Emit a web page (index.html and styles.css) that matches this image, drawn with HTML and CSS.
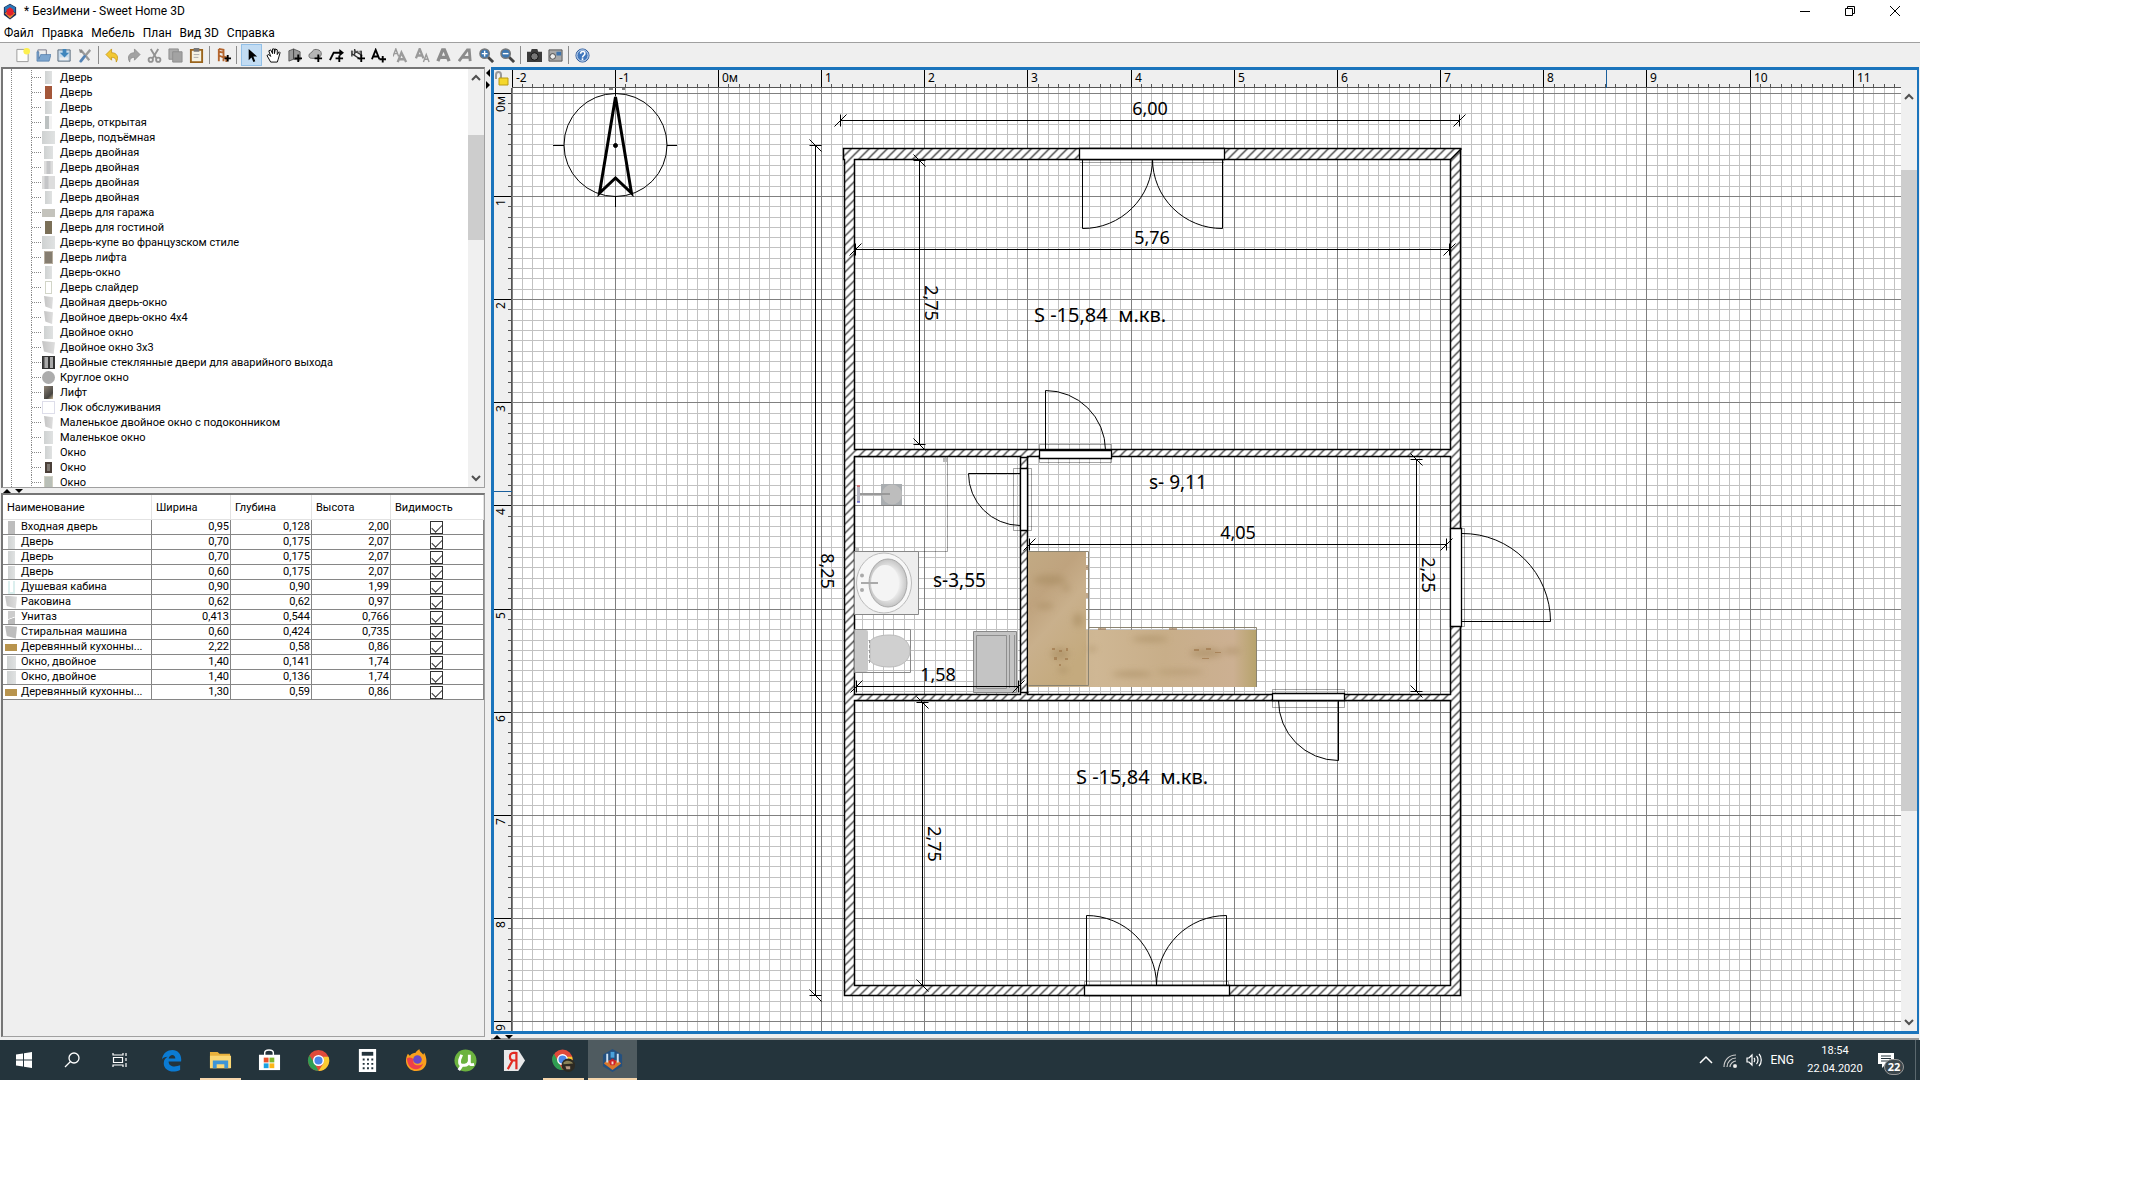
FILE: index.html
```html
<!DOCTYPE html>
<html lang="ru">
<head>
<meta charset="utf-8">
<title>* БезИмени - Sweet Home 3D</title>
<link rel="stylesheet" href="styles.css">
<script src="plan.js" defer></script>
</head>
<body>
<div class="screen">
<header class="titlebar">
  <svg class="applogo" viewBox="0 0 16 18"><path d="M8 0l7 4v9l-7 5-7-5V4z" fill="#1d2c55"/><path d="M8 1l6 3v6L8 6 2 10V4z" fill="#2a78b8"/><path d="M2 11l6 6 6-6-3-2H5z" fill="#e58a35"/><path d="M4 7l4-3 4 3v5l-4 2-4-2z" fill="#e3202b"/></svg>
  <h1>* БезИмени - Sweet Home 3D</h1>
  <div class="winbtns">
    <button aria-label="Свернуть"><svg viewBox="0 0 12 12"><path d="M1 6.500h10"/></svg></button>
    <button aria-label="Развернуть"><svg viewBox="0 0 12 12"><path d="M1.500 3.500h7v7h-7zM3.500 3.500v-2h7v7h-2"/></svg></button>
    <button aria-label="Закрыть"><svg viewBox="0 0 12 12"><path d="M1 1l10 10M11 1L1 11"/></svg></button>
  </div>
</header>
<nav class="menu"><button>Файл</button><button>Правка</button><button>Мебель</button><button>План</button><button>Вид 3D</button><button>Справка</button></nav>
<div class="toolbar">
  <button aria-label="Новый"><svg viewBox="0 0 16 16"><path d="M2 1.500h12v13H2z" fill="#fdfdfb" stroke="#999"/><circle cx="12.500" cy="3.500" r="3.500" fill="#fdf04e"/></svg></button>
  <button aria-label="Открыть"><svg viewBox="0 0 16 16"><path d="M2 2h9v8H2z" fill="#eee" stroke="#778"/><path d="M1 4v10h13l2-7H5l-2 5V4z" fill="#7da6cf" stroke="#4a76a5" stroke-width=".7"/></svg></button>
  <button aria-label="Сохранить"><svg viewBox="0 0 16 16"><path d="M1 2h13v12H1z" fill="#c9dcec" stroke="#567"/><path d="M3 10h9v3H3z" fill="#eee"/><path d="M6 1h4v4h3L8 10 3 5h3z" fill="#3f86bd"/></svg></button>
  <button aria-label="Настройки"><svg viewBox="0 0 16 16"><path d="M3 2l9 11M13 2L8 8" stroke="#9a9a9a" stroke-width="2.500"/><path d="M7 9l-4 5" stroke="#5583b5" stroke-width="3" stroke-linecap="round"/><path d="M1 1l3 1 1 3-3 0z" fill="#888"/></svg></button>
  <i></i>
  <button aria-label="Отменить"><svg viewBox="0 0 16 16"><path d="M1 7l6-6v4c6 0 8 5 5 10 0-4-2-5-5-5v3z" fill="#f2c832" stroke="#c39311" stroke-width=".8"/></svg></button>
  <button aria-label="Повторить"><svg viewBox="0 0 16 16"><path d="M15 7L9 1v4C3 5 1 10 4 15c0-4 2-5 5-5v3z" fill="#a2a2a2" stroke="#8a8a8a" stroke-width=".8"/></svg></button>
  <button aria-label="Вырезать"><svg viewBox="0 0 16 16" fill="none" stroke="#929292" stroke-width="2"><path d="M4 1l6 10M12 1L6 11"/><circle cx="4" cy="12.500" r="2.300"/><circle cx="12" cy="12.500" r="2.300"/></svg></button>
  <button aria-label="Копировать"><svg viewBox="0 0 16 16"><path d="M1 1h10v11H1z" fill="#ababab" stroke="#8e8e8e"/><path d="M5 4h10v11H5z" fill="#a3a3a3" stroke="#8e8e8e"/></svg></button>
  <button aria-label="Вставить"><svg viewBox="0 0 16 16"><path d="M2 2h12v13H2z" fill="#f6f3e4" stroke="#9a641c" stroke-width="2"/><path d="M5 0h6v4H5z" fill="#777"/><path d="M5 7h6M5 10h5" stroke="#aaa"/></svg></button>
  <i></i>
  <button aria-label="Добавить мебель"><svg viewBox="0 0 16 16"><path d="M3 1l5 1v7l3 1v5M3 1v13M3 8l5 2v4M3 4l5 1" stroke="#b4652e" stroke-width="2" fill="none"/><path d="M9 11h7M12.500 7.500v7" stroke="#000" stroke-width="2"/></svg></button>
  <i></i>
  <button class="on" aria-label="Выбрать"><svg viewBox="0 0 16 16"><path d="M5 1v12l3-3 2 5 2-1-2-5h4z" fill="#000"/></svg></button>
  <button class="gap" aria-label="Перемещать"><svg viewBox="0 0 16 16"><path d="M5 15L1 8l2-1 2 2L3 3l2-1 2 4V1h2v5l1-5 2 1v5l2-3 1 1-2 7-1 3z" fill="#fff" stroke="#000"/></svg></button>
  <button aria-label="Стены"><svg viewBox="0 0 16 16"><path d="M2 3l5-2v11l-5 2zM7 1l7 3v9l-7-1z" fill="#9a9a9a" stroke="#444" stroke-width=".8"/><path d="M8 11h8M12 7v8" stroke="#000" stroke-width="2"/></svg></button>
  <button aria-label="Комнаты"><svg viewBox="0 0 16 16"><path d="M1 8c0-3 3-2 4-5 2-3 9-1 9 2 1 4-3 6-6 6H4c-2 0-3-1-3-3z" fill="#b5b5b5" stroke="#666"/><path d="M7 11h8M11 7v8" stroke="#000" stroke-width="2"/></svg></button>
  <button aria-label="Линии"><svg viewBox="0 0 16 16"><path d="M1 13l4-8h8" fill="none" stroke="#000" stroke-width="2"/><path d="M11 1l5 4-5 4z"/><path d="M7 11h8M11 8v7" stroke="#000" stroke-width="2"/></svg></button>
  <button aria-label="Размеры"><svg viewBox="0 0 16 16"><path d="M2 6l9 6M5 3l8 5M2 3v6M5 1v6M12 3v6" stroke="#333" stroke-width="1.500"/><path d="M1 4h12" stroke="#555" stroke-dasharray="2 1" stroke-width="2"/><path d="M8 11h8M12 7v8" stroke="#000" stroke-width="2"/></svg></button>
  <button aria-label="Текст"><svg viewBox="0 0 16 16"><path d="M1 12L5 2l4 10M2.500 9h5" fill="none" stroke="#000" stroke-width="2"/><path d="M9 12h7M12.500 8.500v7" stroke="#000" stroke-width="2"/></svg></button>
  <button class="gap" aria-label="Увеличить шрифт"><svg viewBox="0 0 16 16" fill="none" stroke="#9a9a9a"><path d="M0 9l3-8 3 8M1 6h4" stroke-width="1.500"/><path d="M5 15l4-10 5 10M7 12h5" stroke-width="2.500"/></svg></button>
  <button class="gap" aria-label="Уменьшить шрифт"><svg viewBox="0 0 16 16" fill="none" stroke="#9a9a9a"><path d="M1 11L5 1l4 10M3 8h4" stroke-width="2.500"/><path d="M9 15l3-8 3 8M10 12h4" stroke-width="1.500"/></svg></button>
  <button aria-label="Жирный"><svg viewBox="0 0 16 16" fill="none" stroke="#8c8c8c"><path d="M2 14L7 2h2l5 12M5 10h6" stroke-width="3.500"/></svg></button>
  <button class="gap" aria-label="Курсив"><svg viewBox="0 0 16 16" fill="none" stroke="#8c8c8c"><path d="M1 14L10 2h2l1 12M5 10h7" stroke-width="3"/></svg></button>
  <button aria-label="Приблизить"><svg viewBox="0 0 16 16"><path d="M9 9l6 6" stroke="#444" stroke-width="3"/><circle cx="6" cy="6" r="5" fill="#3d77b0" stroke="#777" stroke-width="1.500"/><path d="M3 6h6M6 3v6" stroke="#fff" stroke-width="1.500"/></svg></button>
  <button aria-label="Отдалить"><svg viewBox="0 0 16 16"><path d="M9 9l6 6" stroke="#444" stroke-width="3"/><circle cx="6" cy="6" r="5" fill="#3d77b0" stroke="#777" stroke-width="1.500"/><path d="M3 6h6" stroke="#fff" stroke-width="1.500"/></svg></button>
  <i></i>
  <button aria-label="Фото"><svg viewBox="0 0 16 16"><path d="M0 4h4l1-3h6l1 3h4v11H0z" fill="#3b3b3b"/><circle cx="8" cy="9" r="4" fill="#777" stroke="#111"/></svg></button>
  <button aria-label="Видео"><svg viewBox="0 0 16 16"><path d="M1 2h14v12H1z" fill="#a8a8a8" stroke="#555"/><path d="M9 4h5v4H9z" fill="#3f74ad"/><circle cx="5" cy="9" r="3" fill="#eee" stroke="#444"/></svg></button>
  <i></i>
  <button aria-label="Помощь"><svg viewBox="0 0 16 16"><circle cx="8" cy="8" r="7" fill="#3f77bd" stroke="#28569a"/><circle cx="8" cy="8" r="6" fill="none" stroke="#dfe9f5"/><path d="M6 6c0-3 5-3 4.500 0C10.500 8 8 8 8 10M8 11v2" fill="none" stroke="#fff" stroke-width="1.700"/></svg></button>
</div>
<main class="work">
  <section class="side">
    <div class="catalog">
      <ul class="tree">
        <li><b class="pic"></b>Дверь</li>
        <li><b class="pic brown"></b>Дверь</li>
        <li><b class="pic"></b>Дверь</li>
        <li><b class="pic ajar"></b>Дверь, открытая</li>
        <li><b class="pic wide"></b>Дверь, подъёмная</li>
        <li><b class="pic mid"></b>Дверь двойная</li>
        <li><b class="pic mid pane"></b>Дверь двойная</li>
        <li><b class="pic wide pane"></b>Дверь двойная</li>
        <li><b class="pic"></b>Дверь двойная</li>
        <li><b class="pic flat"></b>Дверь для гаража</li>
        <li><b class="pic olive"></b>Дверь для гостиной</li>
        <li><b class="pic wide"></b>Дверь-купе во французском стиле</li>
        <li><b class="pic lift"></b>Дверь лифта</li>
        <li><b class="pic"></b>Дверь-окно</li>
        <li><b class="pic frame"></b>Дверь слайдер</li>
        <li><b class="pic mid skew"></b>Двойная дверь-окно</li>
        <li><b class="pic mid skew"></b>Двойное дверь-окно 4x4</li>
        <li><b class="pic mid"></b>Двойное окно</li>
        <li><b class="pic wide skew"></b>Двойное окно 3x3</li>
        <li><b class="pic black"></b>Двойные стеклянные двери для аварийного выхода</li>
        <li><b class="pic round"></b>Круглое окно</li>
        <li><b class="pic cab"></b>Лифт</li>
        <li><b class="pic hatch"></b>Люк обслуживания</li>
        <li><b class="pic mid skew"></b>Маленькое двойное окно с подоконником</li>
        <li><b class="pic mid"></b>Маленькое окно</li>
        <li><b class="pic"></b>Окно</li>
        <li><b class="pic dark"></b>Окно</li>
        <li><b class="pic green"></b>Окно</li>
      </ul>
      <div class="scroll"><svg viewBox="0 0 10 10"><path d="M1 7l4-4 4 4"/></svg><span class="thumb"></span><svg viewBox="0 0 10 10"><path d="M1 3l4 4 4-4"/></svg></div>
    </div>
    <div class="split"><svg viewBox="0 0 24 5"><path d="M2 5l4-4 4 4zM14 1h8l-4 4z"/></svg></div>
    <div class="furniture">
      <table>
        <colgroup><col class="c1"><col class="c2"><col class="c3"><col class="c4"><col></colgroup>
        <thead><tr><th>Наименование</th><th>Ширина</th><th>Глубина</th><th>Высота</th><th>Видимость</th></tr></thead>
        <tbody>
          <tr><td><b class="pic gray"></b>Входная дверь</td><td>0,95</td><td>0,128</td><td>2,00</td><td><input type="checkbox" checked aria-label="Видимость: Входная дверь"></td></tr>
          <tr><td><b class="pic"></b>Дверь</td><td>0,70</td><td>0,175</td><td>2,07</td><td><input type="checkbox" checked aria-label="Видимость: Дверь"></td></tr>
          <tr><td><b class="pic"></b>Дверь</td><td>0,70</td><td>0,175</td><td>2,07</td><td><input type="checkbox" checked aria-label="Видимость: Дверь"></td></tr>
          <tr><td><b class="pic"></b>Дверь</td><td>0,60</td><td>0,175</td><td>2,07</td><td><input type="checkbox" checked aria-label="Видимость: Дверь"></td></tr>
          <tr><td><b class="pic glass"></b>Душевая кабина</td><td>0,90</td><td>0,90</td><td>1,99</td><td><input type="checkbox" checked aria-label="Видимость: Душевая кабина"></td></tr>
          <tr><td><b class="pic wide skew"></b>Раковина</td><td>0,62</td><td>0,62</td><td>0,97</td><td><input type="checkbox" checked aria-label="Видимость: Раковина"></td></tr>
          <tr><td><b class="pic bowl"></b>Унитаз</td><td>0,413</td><td>0,544</td><td>0,766</td><td><input type="checkbox" checked aria-label="Видимость: Унитаз"></td></tr>
          <tr><td><b class="pic wide gray skew"></b>Стиральная машина</td><td>0,60</td><td>0,424</td><td>0,735</td><td><input type="checkbox" checked aria-label="Видимость: Стиральная машина"></td></tr>
          <tr><td><b class="pic wood"></b>Деревянный кухонны...</td><td>2,22</td><td>0,58</td><td>0,86</td><td><input type="checkbox" checked aria-label="Видимость: Деревянный кухонный стол"></td></tr>
          <tr><td><b class="pic mid"></b>Окно, двойное</td><td>1,40</td><td>0,141</td><td>1,74</td><td><input type="checkbox" checked aria-label="Видимость: Окно, двойное"></td></tr>
          <tr><td><b class="pic mid"></b>Окно, двойное</td><td>1,40</td><td>0,136</td><td>1,74</td><td><input type="checkbox" checked aria-label="Видимость: Окно, двойное"></td></tr>
          <tr><td><b class="pic wood"></b>Деревянный кухонны...</td><td>1,30</td><td>0,59</td><td>0,86</td><td><input type="checkbox" checked aria-label="Видимость: Деревянный кухонный стол"></td></tr>
        </tbody>
      </table>
    </div>
  </section>
  <div class="vsplit"><svg viewBox="0 0 6 20"><path d="M5 0v8L1 4zM1 12v8l4-4z"/></svg></div>
  <section class="planside">
    <div class="planframe">
      <svg class="plan">
        <defs>
          <pattern id="hatch" width="9" height="9" patternUnits="userSpaceOnUse"><path d="M-1 10L10-1M-1 1L1-1M8 10l2-2" stroke="#111" stroke-width="1.200"/></pattern>
          <linearGradient id="woodv" x1="0" y1="0" x2=".5" y2="1"><stop offset="0" stop-color="#c2aa84"/><stop offset=".35" stop-color="#bfa37e"/><stop offset=".6" stop-color="#c9b08c"/><stop offset="1" stop-color="#c4aa7e"/></linearGradient>
          <linearGradient id="woodh"><stop offset="0" stop-color="#c5ae88"/><stop offset=".3" stop-color="#cfb794"/><stop offset=".6" stop-color="#c8ae89"/><stop offset=".9" stop-color="#ccb092"/><stop offset="1" stop-color="#b7a36c"/></linearGradient>
          <radialGradient id="basin"><stop offset="0" stop-color="#fff"/><stop offset=".6" stop-color="#eee"/><stop offset="1" stop-color="#c4c4c4"/></radialGradient>
          <filter id="soft"><feGaussianBlur stdDeviation="3"/></filter>
          <clipPath id="area"><rect x="512" y="88" width="1388" height="944"/></clipPath>
        </defs>
        <g transform="translate(-494 -70)">
          <g id="grid"></g>
          <g class="compass" clip-path="url(#area)">
            <circle cx="615.500" cy="145" r="51.500"/>
            <path d="M553 145.500h11M667 145.500h10M615.500 88v8M615.500 196v11M609 89h4M622 89h3"/>
            <path d="M615.500 97l-16 96 16-15 16 15z" stroke-width="3"/>
            <circle cx="615.500" cy="145.500" r="2" fill="#000"/>
          </g>
          <g class="wall" transform="translate(.5 .5)">
            <path d="M843 148h617v847H844V159h-1zM854 159v290h596V159zM854 456v238h166V456zM1027 456v238h423V456zM854 700v285h596V700z" fill="#fff" fill-rule="evenodd" stroke="none"/>
            <path d="M843 148h617v847H844V159h-1zM854 159v290h596V159zM854 456v238h166V456zM1027 456v238h423V456zM854 700v285h596V700z" fill="url(#hatch)" fill-rule="evenodd" stroke-width="1.500"/>
            <path d="M1020 457h8M1020 692h8M1450 159l11-11" stroke-width="1.500"/>
          </g>
          <g class="outline">
            <path d="M854 457h93.500v94.500H854zM1039.500 444.500h72v18h-72zM1013.500 468.500h18v62h-18zM1272.500 689.500h72v18h-72zM1451.500 528.500h13v98h-13zM1080 162.500h144M1084.500 985v-3.500h144v3.500"/>
          </g>
          <g class="opening">
            <path transform="translate(.5 .5)" stroke-width="1.300" d="M1079 148h145v11h-145zM1084 985h145v10h-145zM1039 450h72v8h-72zM1020 468h7v62h-7zM1272 693h72v7h-72zM1450 528h11v98h-11z"/>
            <path class="leaf" d="M1082.500 159v69.500A69.500 69.500 0 0 0 1152.500 159A69.500 69.500 0 0 0 1222.500 228.500V159M1086.500 985v-69.500A70 70 0 0 1 1156.500 985A70 70 0 0 1 1226.500 915.500V985M1045.500 450v-59.500A60 60 0 0 1 1105.500 450M1020 473.500h-51.500A52 52 0 0 0 1020 525.500M1338.500 700v60.500A60 60 0 0 1 1278.500 700M1462 621.500h88.500A88 88 0 0 0 1462 533.500"/>
          </g>
          <g class="fixtures">
            <path d="M881 484h21v21h-21z" fill="#a9adb0"/><circle cx="892" cy="494.500" r="10" fill="#bdbdbd"/><path d="M859 494h31" stroke="#999" stroke-width="2"/><path d="M858.500 486v16" stroke="#b9b9c4" stroke-width="3"/><path d="M857 486h3" stroke="#d33"/><path d="M857 502h3" stroke="#33c"/><path d="M943 458h4v4h-4zM855 548h4v4h-4z" fill="#bbb"/>
            <path d="M854.500 551.500h64v63h-64z" fill="#eee" stroke="#888"/>
            <ellipse cx="884" cy="583" rx="27.500" ry="30" fill="#f7f7f7" stroke="#bbb"/><ellipse cx="888" cy="583" rx="19" ry="24" fill="url(#basin)" stroke="#aaa"/><ellipse cx="885" cy="583" rx="14" ry="18" fill="#f4f4f4"/><path d="M861 583h17" stroke="#aaa" stroke-width="2"/><circle cx="862" cy="575.500" r="2" fill="#aaa"/><circle cx="862" cy="590" r="2" fill="#aaa"/>
            <path d="M854.500 629.500h56v43h-56z" fill="none" stroke="#888"/><rect x="855" y="630" width="13" height="42" rx="2" fill="#c9c9c9"/><path d="M870 641c4-4 10-6 20-6 12 0 20 7 20 16s-8 16-20 16c-10 0-16-2-20-6z" fill="#d0d0d0" stroke="#bbb"/><path d="M869.500 640v23" stroke="#999" stroke-dasharray="3 2"/>
            <path d="M973.500 631.500h43v61h-43z" fill="#c4c4c4" stroke="#888"/><path d="M976.500 635.500h30v53h-30zM1009.500 635v53M1014.500 635v53" fill="none" stroke="#8f8f8f"/>
            <path d="M1028 551h58v134h-58z" fill="url(#woodv)"/><path d="M1086 630h170v57h-228v-2h58z" fill="url(#woodh)"/>
            <g filter="url(#soft)" fill="#a68a5f" opacity=".55"><ellipse cx="1050" cy="580" rx="16" ry="5"/><ellipse cx="1066" cy="588" rx="4" ry="3"/><ellipse cx="1078" cy="620" rx="5" ry="7"/><ellipse cx="1045" cy="606" rx="9" ry="3"/><ellipse cx="1060" cy="654" rx="9" ry="6"/><ellipse cx="1063" cy="670" rx="5" ry="3"/><ellipse cx="1150" cy="639" rx="18" ry="3"/><ellipse cx="1092" cy="649" rx="5" ry="2"/><ellipse cx="1206" cy="653" rx="16" ry="5"/><ellipse cx="1232" cy="651" rx="9" ry="3"/><ellipse cx="1132" cy="674" rx="20" ry="3"/><ellipse cx="1180" cy="672" rx="24" ry="2"/></g>
            <g fill="#9a7042" opacity=".6"><path d="M1052 648h3v2h-3zM1059 650h3v2h-3zM1066 648h2v3h-2zM1054 657h3v3h-3zM1065 658h3v2h-3zM1059 664h2v2h-2zM1194 649h5v2h-5zM1206 648h5v2h-5zM1215 652h6v1h-6zM1202 658h7v1h-7zM1086 565h2v5h-2zM1086 593h2v5h-2zM1098 628h8v2h-8zM1169 628h8v2h-8z"/></g>
            <path d="M1028.500 551.500h60v134h-60M1088.500 627.500h168V687" fill="none" stroke="#8a8371"/>
          </g>
          <g id="dims"></g>
          <g class="notes">
            <text class="big" x="1034" y="322">S -15,84&#160; м.кв.</text>
            <text class="big" x="1076" y="784">S -15,84&#160; м.кв.</text>
            <text x="1149" y="489">s- 9,11</text>
            <text x="933" y="587">s-3,55</text>
          </g>
        </g>
      </svg>
      <div class="rulertop"><svg width="100%" height="18"><g id="rulerx" transform="translate(-512 -70)"></g></svg></div>
      <div class="rulerleft"><svg width="18" height="100%"><g id="rulery" transform="translate(-494 -88)"></g></svg></div>
      <button class="lock" aria-label="Блокировка плана"><svg viewBox="0 0 16 16"><path d="M2 8V4c0-4 5-4 5 0v3" fill="none" stroke="#999" stroke-width="2"/><path d="M5 7h9v7H5z" fill="#f5d72c" stroke="#b99a12"/></svg></button>
      <div class="scroll planscroll"><svg viewBox="0 0 10 10"><path d="M1 7l4-4 4 4"/></svg><span class="thumb"></span><svg viewBox="0 0 10 10"><path d="M1 3l4 4 4-4"/></svg></div>
    </div>
    <div class="split low"><svg viewBox="0 0 24 5"><path d="M2 5l4-4 4 4zM14 1h8l-4 4z"/></svg></div>
  </section>
</main>
<footer class="taskbar">
  <button aria-label="Пуск"><svg viewBox="0 0 16 16" fill="#fff"><path d="M0 2.500l7-1v6H0zM8 1.300L16 0v7.500H8zM0 8.500h7v6l-7-1zM8 8.500h8V16l-8-1.300z"/></svg></button>
  <button aria-label="Поиск"><svg viewBox="0 0 16 16" fill="none" stroke="#fff" stroke-width="1.300"><circle cx="10" cy="6" r="5"/><path d="M6.500 9.500L1 15"/></svg></button>
  <button aria-label="Представление задач"><svg viewBox="0 0 16 16" fill="none" stroke="#fff" stroke-width="1.200"><path d="M1 1v2h10V1M1.500 5.500h9v5h-9zM1 15v-2h10v2M14 1v3M14 6v3M14 11v4"/></svg></button>
  <div class="apps">
  <button aria-label="Edge"><svg viewBox="0 0 24 24"><path d="M2 11C3 4 8 1 13 1c6 0 10 5 9 12H9c0 6 7 6 12 4v5c-9 4-18 0-17-8 0-3 2-5 4-6-3 0-5 1-6 3zM9 10h7c0-5-6-5-7 0z" fill="#0b7bd3"/></svg></button>
  <button class="open" aria-label="Проводник"><svg viewBox="0 0 24 24"><path d="M1 3h8l2 2h11v15H1z" fill="#e9b13c"/><path d="M1 7h22v13H1z" fill="#fbd774"/><path d="M4 20v-8h16v8h-4v-4H8v4z" fill="#3e95d6"/></svg></button>
  <button aria-label="Магазин"><svg viewBox="0 0 24 24"><path d="M7 7V4c0-4 9-4 9 0v3" fill="none" stroke="#fff" stroke-width="1.500"/><path d="M1 6h22v16H1z" fill="#fff"/><path d="M6 9h5v5H6z" fill="#e8502a"/><path d="M12 9h5v5h-5z" fill="#7fb72a"/><path d="M6 15h5v5H6z" fill="#1ba1e2"/><path d="M12 15h5v5h-5z" fill="#fbb616"/></svg></button>
  <button aria-label="Chrome"><svg viewBox="0 0 24 24"><circle cx="12" cy="12" r="11" fill="#e04a3b"/><path d="M2.500 6.500L8 15l4 8A11 11 0 0 1 2.500 6.500z" fill="#2f9e52"/><path d="M12 23l5-8V8h5.500A11 11 0 0 1 12 23z" fill="#fbcb32"/><circle cx="12" cy="12" r="5" fill="#4a86e8" stroke="#fff" stroke-width="1.500"/></svg></button>
  <button aria-label="Калькулятор"><svg viewBox="0 0 24 24"><path d="M3 0h18v24H3z" fill="#fff"/><path d="M6 3h12v4H6z" fill="#24343c"/><path d="M7 11h11M7 15.500h11M7 20h11" stroke="#24343c" stroke-width="2" stroke-dasharray="2 2.500"/></svg></button>
  <button aria-label="Firefox"><svg viewBox="0 0 24 24"><path d="M3 5l2 2c2-2 4-3 6-3 1-2 3-3 4-4 0 3 3 4 4 6l1-2c5 9 2 19-8 19C3 23-2 14 3 5z" fill="#f9a01e"/><path d="M2 10c2-2 6-1 7 1-2 6 5 8 10 4-3 9-16 9-17-5z" fill="#ee3f4a"/><circle cx="13" cy="11" r="4.500" fill="#6b48c8"/></svg></button>
  <button aria-label="µTorrent"><svg viewBox="0 0 24 24"><circle cx="12" cy="12" r="11.500" fill="#6cb33f"/><path d="M8 6l-2 5c-1 6 1 6 5 6 3 0 4-1 5-4V6M5 22l4-6M16 13c0 3 1 4 5 3" fill="none" stroke="#fff" stroke-width="3"/></svg></button>
  <button aria-label="Яндекс"><svg viewBox="0 0 24 24"><path d="M1 1h15l7 11-7 11H1z" fill="#e9e9ea"/><path d="M14 3v18M14 4h-3c-5 0-5 8 0 8h3M10 12l-5 9" fill="none" stroke="#e22b22" stroke-width="2.300"/></svg></button>
  <button class="open" aria-label="Chrome, профиль"><svg viewBox="0 0 24 24"><circle cx="11" cy="11" r="10.500" fill="#e04a3b"/><path d="M2 5l5 9 4 8A11 11 0 0 1 2 5z" fill="#2f9e52"/><path d="M11 22l5-8V8h5A11 11 0 0 1 11 22z" fill="#fbcb32"/><circle cx="11" cy="11" r="5" fill="#4a86e8" stroke="#fff" stroke-width="1.500"/><circle cx="17" cy="17" r="7" fill="#2d2a22"/><path d="M12 14c3-3 8-2 10 1l-10 1z" fill="#8a8257"/><path d="M14 18h5v3h-4z" fill="#b99a84"/></svg></button>
  <button class="open active" aria-label="Sweet Home 3D"><svg viewBox="0 0 24 24"><path d="M12 0l10 6v12l-10 6-10-6V6z" fill="#24507f"/><path d="M3 15l9 7 9-7-3-3H6z" fill="#d9772c"/><path d="M6.500 5v9M17.500 5v9" stroke="#cfe3f3" stroke-width="2"/><path d="M12 3v6" stroke="#4aa2dc" stroke-width="4"/><path d="M12 10l4 3-2 4h-4l-2-4z" fill="#cf2027"/><path d="M11 13h2v3h-2z" fill="#f4d9d0"/></svg></button>
  </div>
  <div class="tray">
    <svg class="i16" viewBox="0 0 16 16" fill="none" stroke="#fff" stroke-width="1.500"><path d="M2 11l6-6 6 6"/></svg>
    <svg class="i16" viewBox="0 0 16 16" fill="none" stroke="#ccc" stroke-width="1.200"><path d="M2 15C2 8 7 3 14 3M5 15c0-5 4-9 9-9M8 15c0-3 3-6 6-6"/><circle cx="13" cy="14" r="1.500" fill="#fff"/></svg>
    <svg class="i16" viewBox="0 0 16 16" fill="none" stroke="#fff" stroke-width="1.200"><path d="M1 6h2l3-3v10l-3-3H1zM8 6c1 1 1 3 0 4M10.500 4c2 2 2 6 0 8M13 2c3 3 3 9 0 12"/></svg>
    <span>ENG</span>
    <time class="clock">18:54<br>22.04.2020</time>
    <span class="bell"><svg class="i16" viewBox="0 0 16 16"><path d="M0 1h16v11H8l-4 4v-4H0z" fill="#fff"/><path d="M3 4h10M3 6.500h10M3 9h8" stroke="#24343c"/></svg><em>22</em></span>
  </div>
</footer>
</div>
</body>
</html>
```
FILE: styles.css
```css
* { box-sizing: border-box; }
body { margin: 0; background: #fff; color: #000; font: 11px/15px Roboto, "Noto Sans", sans-serif; }
button { border: 0; padding: 0; margin: 0; background: none; font: inherit; color: inherit; }
svg { display: block; }
.screen { display: flex; flex-direction: column; height: 100vh; padding: 0 222px 120px 0; }

.titlebar { display: flex; align-items: center; height: 22px; padding-left: 3px; }
.titlebar h1 { margin: 0; font-size: 12px; font-weight: 400; }
.applogo { width: 14px; height: 17px; margin-right: 7px; }
.winbtns { display: flex; margin: 0 3px 0 auto; }
.winbtns button { display: grid; place-items: center; width: 45px; height: 20px; }
.winbtns svg { width: 12px; height: 12px; fill: none; stroke: #000; }
.menu { display: flex; gap: 8px; height: 21px; padding: 2px 0 0 4px; font-size: 12px; border-bottom: 1px solid #a0a0a0; }
.toolbar { display: flex; align-items: center; height: 24px; padding-left: 9px; background: #efefef; border-left: 3px dotted #efefef; }
.toolbar button { display: grid; place-items: center; width: 21px; height: 22px; }
.toolbar svg { width: 15px; height: 15px; }
.toolbar i { width: 1px; height: 18px; margin: 0 3px 0 2px; background: #8c8c8c; }
.toolbar .on { margin-left: 1px; background: #c2dcf3; outline: 1px solid #92c0e8; outline-offset: -1px; }
.toolbar .gap { margin-left: 1px; }

.work { display: flex; flex: 1; min-height: 0; background: #efefef; }
.side { display: flex; flex-direction: column; width: 485px; padding: 0 0 3px 1px; }
.catalog { display: flex; height: 421px; overflow: hidden; background: #fff; border: 2px solid #767676; border-right: 1px solid #a0a0a0; border-bottom: 1px solid #a0a0a0; }
.tree { flex: 1; margin: 0 0 0 8px; padding: 1px 0 0 19px; list-style: none; border-left: 1px dotted #888; }
.tree li { display: flex; align-items: center; height: 15px; border-left: 1px dotted #888; white-space: nowrap; }
.tree li::before { content: ""; width: 9px; border-top: 1px dotted #888; }
.pic { flex: none; width: 7px; height: 13px; margin: 0 6px 0 5px; background: linear-gradient(90deg, #cfd2d2, #e0e2e2); }
.tree .pic { margin: 0 8px 0 4px; }
.tree .mid, .tree .green, .tree .lift, .tree .cab { width: 9px; margin: 0 7px 0 3px; }
.tree .wide, .tree .flat, .tree .black, .tree .round, .tree .hatch { width: 13px; margin: 0 5px 0 1px; }
.mid { width: 9px; margin: 0 5px 0 4px; }
.wide, .wood { width: 12px; margin: 0 4px 0 2px; }
.pane { background: linear-gradient(90deg, #ddd 2px, #c4c5c7 3px, #c4c5c7 6px, #ddd 7px); }
.ajar { background: linear-gradient(90deg, #bcc1c1 4px, #f2f2f2 4px); }
.skew { clip-path: polygon(0 0, 100% 10%, 90% 100%, 15% 80%); background: linear-gradient(90deg, #c4c4c4, #dedede); }
.gray { background: #bdbdbd; }
.brown { background: #a4573a; }
.olive { background: #7b7058; }
.flat { height: 8px; background: #c4c3bc; }
.lift { background: #857d70; border: 1px solid #b7aea0; }
.frame { background: #fff; border: 1px solid #d2d5c8; }
.black { background: linear-gradient(90deg, #444 1px, #aaa 2px 5px, #333 5px 7px, #aaa 7px 10px, #333 10px); border: 1px solid #333; }
.round { border-radius: 50%; background: #acacac; }
.cab { background: linear-gradient(135deg, #8d8376, #474541 70%, #c6b493); }
.hatch { background: #fff; border: 1px solid #dedeea; }
.dark { background: #7e7872; border: 2px solid #4b4039; height: 11px; }
.green { background: #b9bfb7; border: 1px solid #d0d0c4; }
.glass { background: #fff; border: 2px solid #dcefee; border-top: 0; }
.bowl { background: linear-gradient(160deg, #ccc 50%, #fff 55%, #bbb 60%); }
.wood { height: 7px; background: #b8944e; }

.scroll { display: flex; flex-direction: column; width: 16px; background: #f0f0f0; }
.scroll svg { width: 10px; height: 10px; margin: 4px 3px; fill: none; stroke: #505050; stroke-width: 2; }
.scroll .thumb { height: 25%; margin-top: 48px; margin-bottom: auto; background: #cdcdcd; }
.split { height: 5px; }
.split svg { width: 24px; height: 5px; }
.split.low { height: 6px; border-bottom: 2px solid #9a9a9a; }
.vsplit { width: 6px; padding-top: 2px; }
.vsplit svg { width: 6px; height: 20px; }

.furniture { flex: 1; overflow: hidden; border: 2px solid #767676; border-right: 1px solid #a0a0a0; border-bottom: 1px solid #a0a0a0; }
.furniture table { width: 100%; table-layout: fixed; border-collapse: separate; border-spacing: 0; background: #fff; }
.c1 { width: 149px; }
.c2 { width: 79px; }
.c3 { width: 81px; }
.c4 { width: 79px; }
.furniture th { height: 25px; padding: 1px 0 0 4px; text-align: left; font-weight: 400; border-right: 1px solid #e2e2e2; border-bottom: 1px solid #e2e2e2; }
.furniture td { height: 15px; padding: 0 1px 0 0; line-height: 14px; text-align: right; border-right: 1px solid #868686; border-bottom: 1px solid #868686; }
.furniture td:first-child { display: flex; align-items: center; white-space: nowrap; overflow: hidden; }
.furniture td:last-child { text-align: center; }
.furniture input { display: block; appearance: none; width: 13px; height: 13px; margin: 0 auto; background: #fff; border: 1px solid #333; }
.furniture input:checked::before { content: ""; display: block; width: 9px; height: 5px; margin: 2px 1px; border: solid #333; border-width: 0 0 1px 1px; rotate: -45deg; }

.planside { display: flex; flex: 1; flex-direction: column; min-width: 0; padding-right: 1px; }
.planframe { display: grid; grid-template: 18px 1fr / 18px 1fr 16px; flex: 1; min-height: 0; background: #efefef; border: 3px solid #1b74bc; border-right-width: 2px; }
.plan { grid-area: 1 / 1 / 3 / 3; width: 100%; height: 100%; background: #fff; overflow: hidden; font-family: "Noto Sans", sans-serif; }
.rulertop { grid-area: 1 / 2; background: #efefef; }
.rulerleft { grid-area: 2 / 1; background: #efefef; }
.rulertop svg, .rulerleft svg { overflow: visible; }
.lock { grid-area: 1 / 1; background: #efefef; }
.lock svg { width: 16px; height: 16px; }
.planscroll { grid-area: 2 / 3; }
.planscroll .thumb { height: 68%; margin-top: 64px; }
#rulerx, #rulery { fill: #000; stroke: none; font: 12px "Noto Sans", sans-serif; shape-rendering: crispEdges; }
.minor { fill: #c2c2c2; }
.major { fill: #808080; }
.tick { fill: #555; }
.cursor { fill: #1b5f9c; }
.compass { fill: none; stroke: #000; }
.wall { stroke: #000; fill: none; }
.outline { fill: none; stroke: #000; stroke-opacity: .35; }
.opening { fill: #fff; stroke: #000; }
.opening .leaf { fill: none; }
#dims { fill: none; stroke: #000; }
#dims text { fill: #000; stroke: none; font-size: 18px; text-anchor: middle; }
.notes { font-size: 19px; }
.notes .big { font-size: 20px; }

.taskbar { display: flex; height: 40px; background: #24343c; color: #fff; }
.taskbar button { display: grid; place-items: center; width: 48px; height: 40px; }
.taskbar button svg { width: 16px; height: 16px; }
.apps { display: flex; margin-left: 3px; }
.apps button { width: 49px; border: solid transparent; border-width: 0 4px; }
.taskbar .apps svg { width: 23px; height: 23px; }
.apps .open { background: linear-gradient(#f6d6ac, #f6d6ac) bottom / 100% 2px no-repeat padding-box; }
.apps .active { border-width: 0; background-color: #4f5b60; }
.tray { display: flex; align-items: center; gap: 8px; margin: 0 4px 0 auto; padding-right: 21px; border-right: 1px solid #5b686e; font-size: 12px; }
.i16 { width: 16px; height: 16px; }
.clock { width: 66px; line-height: 18px; text-align: center; font-size: 11px; }
.bell { position: relative; margin-left: 2px; }
.bell em { position: absolute; left: 6px; top: 7px; width: 20px; height: 16px; border: 1px solid #999; border-radius: 8px; background: #3c474c; text-align: center; font: 700 11px/14px "Noto Sans", sans-serif; }
```
FILE: plan.js
```js
const NS = 'http://www.w3.org/2000/svg';
const METRE = 103.17, X0 = 718.4, Y0 = 93.2;
const frame = document.querySelector('.plan').getBoundingClientRect();
const X_END = 494 + Math.round(frame.width), Y_END = 70 + Math.round(frame.height);

function add(parent, name, attrs, text) {
  const el = document.createElementNS(NS, name);
  for (const key in attrs) el.setAttribute(key, attrs[key]);
  if (text !== undefined) el.textContent = text;
  parent.append(el);
}
const rect = (parent, cls, x, y, width, height) =>
  add(parent, 'rect', { class: cls, x, y, width, height });

const grid = document.getElementById('grid');
const rulerX = document.getElementById('rulerx');
const rulerY = document.getElementById('rulery');

// Thin lines go first so that the metre lines stay on top.
for (const major of [false, true]) {
  for (let i = -20; X0 + i * METRE / 10 < X_END; i++) {
    if ((i % 10 === 0) !== major) continue;
    const x = Math.floor(X0 + i * METRE / 10);
    rect(grid, major ? 'major' : 'minor', x, 88, 1, Y_END - 88);
    if (major) {
      rect(rulerX, '', x, 70, 1, 18);
      add(rulerX, 'text', { x: x + 4, y: 82 }, i === 0 ? '0м' : i / 10);
    } else rect(rulerX, 'tick', x, 84, 1, 4);
  }
  for (let i = 0; Y0 + i * METRE / 10 < Y_END; i++) {
    if ((i % 10 === 0) !== major) continue;
    const y = Math.floor(Y0 + i * METRE / 10);
    rect(grid, major ? 'major' : 'minor', 512, y, X_END - 512, 1);
    if (major) {
      rect(rulerY, '', 494, y, 18, 1);
      add(rulerY, 'text', { transform: `translate(505 ${y + 3}) rotate(-90)`, 'text-anchor': 'end' }, i === 0 ? '0м' : i / 10);
    } else rect(rulerY, 'tick', 508, y, 4, 1);
  }
}
rect(rulerX, 'tick', 512, 87, X_END - 512, 1);
rect(rulerY, 'tick', 511, 88, 1, Y_END - 88);
rect(rulerX, 'cursor', 1606, 70, 1, 18);
rect(rulerY, 'cursor', 494, 491, 18, 1);

// Dimension lines: horizontal ones as [y, x1, x2, label, centre], vertical ones as [x, y1, y2, label, centre].
const dims = document.getElementById('dims');
const across = [[120.5, 840.5, 1459.5, '6,00', 1150], [249.5, 855.5, 1449.5, '5,76', 1152], [544.5, 1029.5, 1446.5, '4,05', 1238], [686.5, 856.5, 1018.5, '1,58', 938]];
const down = [[815.5, 145.5, 995.5, '8,25', 571], [919.5, 160.5, 444.5, '2,75', 303], [1416.5, 459.5, 691.5, '2,25', 575], [922.5, 702.5, 985.5, '2,75', 844]];
for (const [y, a, b, label, mid] of across) {
  add(dims, 'path', { d: `M${a} ${y}H${b}M${a} ${y - 6}v12M${b} ${y - 6}v12M${a - 6} ${y + 6}l12-12M${b - 6} ${y + 6}l12-12` });
  add(dims, 'text', { x: mid, y: y - 6 }, label);
}
for (const [x, a, b, label, mid] of down) {
  add(dims, 'path', { d: `M${x} ${a}V${b}M${x - 6} ${a}h12M${x - 6} ${b}h12M${x - 6} ${a - 6}l12 12M${x - 6} ${b - 6}l12 12` });
  add(dims, 'text', { transform: `translate(${x + 5} ${mid}) rotate(90)` }, label);
}
```
